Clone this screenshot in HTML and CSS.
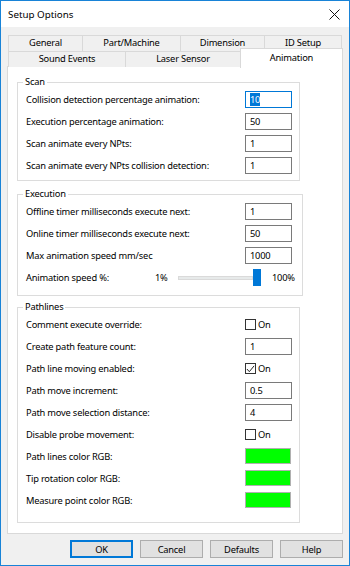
FILE: index.html
```html
<!DOCTYPE html>
<html lang="en">
<head>
    <meta charset="UTF-8">
    <meta name="viewport" content="width=device-width, initial-scale=1.0">
    <title>Setup Options</title>
    <link rel="stylesheet" href="styles.css">
</head>
<body>
    <div class="dialog">
        <div class="titlebar">
            <span class="title">Setup Options</span>
            <svg class="close" width="11" height="11" viewBox="0 0 11 11">
                <path d="M0.5 0.5 L10.5 10.5 M10.5 0.5 L0.5 10.5" stroke="#111" stroke-width="1" fill="none"/>
            </svg>
        </div>

        <div class="client">
            <div class="tabs">
                <div class="tab-row">
                    <div class="tab" style="width: 75px">General</div>
                    <div class="tab" style="width: 99px">Part/Machine</div>
                    <div class="tab" style="width: 85px">Dimension</div>
                    <div class="tab" style="width: 78px">ID Setup</div>
                </div>
                <div class="tab-row">
                    <div class="tab" style="width: 118px">Sound Events</div>
                    <div class="tab" style="width: 116px">Laser Sensor</div>
                    <div class="tab active" style="width: 103px">Animation</div>
                </div>
            </div>

            <div class="panel">
                <fieldset class="group group-scan">
                    <legend>Scan</legend>
                    <div class="row">
                        <label>Collision detection percentage animation:</label>
                        <div class="field focused"><span class="sel">10</span></div>
                    </div>
                    <div class="row">
                        <label>Execution percentage animation:</label>
                        <div class="field">50</div>
                    </div>
                    <div class="row">
                        <label>Scan animate every NPts:</label>
                        <div class="field">1</div>
                    </div>
                    <div class="row">
                        <label>Scan animate every NPts collision detection:</label>
                        <div class="field">1</div>
                    </div>
                </fieldset>

                <fieldset class="group group-exec">
                    <legend>Execution</legend>
                    <div class="row">
                        <label>Offline timer milliseconds execute next:</label>
                        <div class="field">1</div>
                    </div>
                    <div class="row">
                        <label>Online timer milliseconds execute next:</label>
                        <div class="field">50</div>
                    </div>
                    <div class="row">
                        <label>Max animation speed mm/sec</label>
                        <div class="field">1000</div>
                    </div>
                    <div class="row slider-row">
                        <label class="slider-label">Animation speed %:</label>
                        <span class="slider-min">1%</span>
                        <div class="slider-track"></div>
                        <div class="slider-thumb"></div>
                        <span class="slider-max">100%</span>
                    </div>
                </fieldset>

                <fieldset class="group group-path">
                    <legend>Pathlines</legend>
                    <div class="row">
                        <label>Comment execute override:</label>
                        <div class="check"><span class="box"></span>On</div>
                    </div>
                    <div class="row">
                        <label>Create path feature count:</label>
                        <div class="field">1</div>
                    </div>
                    <div class="row">
                        <label>Path line moving enabled:</label>
                        <div class="check">
                            <span class="box">
                                <svg width="10" height="10" viewBox="0 0 10 10">
                                    <path d="M1 5 L3.7 8 L9 1.5" stroke="#222" stroke-width="1.1" fill="none"/>
                                </svg>
                            </span>On
                        </div>
                    </div>
                    <div class="row">
                        <label>Path move increment:</label>
                        <div class="field">0.5</div>
                    </div>
                    <div class="row">
                        <label>Path move selection distance:</label>
                        <div class="field">4</div>
                    </div>
                    <div class="row">
                        <label>Disable probe movement:</label>
                        <div class="check"><span class="box"></span>On</div>
                    </div>
                    <div class="row">
                        <label>Path lines color RGB:</label>
                        <div class="swatch" style="background: #00ff00"></div>
                    </div>
                    <div class="row">
                        <label>Tip rotation color RGB:</label>
                        <div class="swatch" style="background: #00ff00"></div>
                    </div>
                    <div class="row">
                        <label>Measure point color RGB:</label>
                        <div class="swatch" style="background: #00ff00"></div>
                    </div>
                </fieldset>
            </div>

            <div class="buttons">
                <button class="default">OK</button>
                <button>Cancel</button>
                <button>Defaults</button>
                <button>Help</button>
            </div>
        </div>
    </div>
</body>
</html>
```

FILE: styles.css
```css
* {
    box-sizing: border-box;
}
body {
    margin: 0;
    font-family: "Noto Sans", "Open Sans", sans-serif;
    font-size: 9.3px;
    letter-spacing: -0.2px;
    color: #000;
    background: #fff;
}
.dialog {
    width: 350px;
    height: 566px;
    border: 1px solid #1883d7;
    background: #f0f0f0;
    display: flex;
    flex-direction: column;
}
.titlebar {
    height: 26px;
    background: #fff;
    display: flex;
    align-items: center;
    justify-content: space-between;
    padding: 0 9px 0 7px;
}
.title {
    font-size: 9.8px;
    letter-spacing: 0;
}
.client {
    flex: 1;
    padding-top: 8px;
}
.tabs {
    padding-left: 7px;
}
.tab-row {
    display: flex;
    height: 16px;
}
.tab {
    border: 1px solid #d9d9d9;
    border-bottom: none;
    background: #f0f0f0;
    text-align: center;
    line-height: 14px;
    height: 16px;
}
.tab + .tab {
    margin-left: -1px;
}
.tab.active {
    background: #fff;
    position: relative;
    z-index: 1;
    margin-top: -3px;
    height: 20px;
    line-height: 17px;
    align-self: flex-start;
}
.panel {
    margin: -1px 6px 0 6px;
    height: 468px;
    background: #fff;
    border: 1px solid #d9d9d9;
    padding: 9px 0 0 9px;
}
.group {
    width: 283px;
    margin: 0;
    border: 1px solid #dcdcdc;
    padding: 0 7px 0 8px;
}
.group legend {
    padding: 0 2px;
    margin-left: -3px;
    line-height: 12px;
}
.group-scan {
    padding-bottom: 4px;
}
.group-exec {
    margin-top: 7px;
    padding-bottom: 6px;
}
.group-path {
    margin-top: 5px;
    padding-bottom: 11px;
}
.row {
    display: flex;
    align-items: center;
    height: 22px;
}
.row label {
    width: 219px;
    flex: none;
}
.field {
    width: 47px;
    height: 17px;
    border: 1px solid #7a7a7a;
    background: #fff;
    padding: 0 4px;
    line-height: 15px;
}
.field.focused {
    border-color: #0078d7;
}
.sel {
    background: #0078d7;
    color: #fff;
}
.check {
    display: flex;
    align-items: center;
}
.box {
    width: 11px;
    height: 11px;
    border: 1px solid #333;
    background: #fff;
    margin-right: 2px;
    display: flex;
}
.swatch {
    width: 46px;
    height: 16px;
    border: 1px solid #b0b0b0;
}
.slider-row {
    height: 23px;
}
.row .slider-label {
    width: 129px;
}
.slider-min {
    width: 23px;
}
.slider-track {
    width: 75px;
    height: 4px;
    background: #e7eaea;
    border: 1px solid #dadada;
}
.slider-thumb {
    width: 8px;
    height: 17px;
    background: #0078d7;
}
.slider-max {
    margin-left: 11px;
}
.buttons {
    display: flex;
    justify-content: flex-end;
    gap: 7px;
    padding: 6px 6px 0 0;
}
button {
    width: 63px;
    height: 18px;
    font-family: inherit;
    font-size: 9.3px;
    letter-spacing: -0.2px;
    background: #e1e1e1;
    border: 1px solid #adadad;
    padding: 0;
    color: #000;
}
button.default {
    border: 2px solid #0078d7;
}
```
